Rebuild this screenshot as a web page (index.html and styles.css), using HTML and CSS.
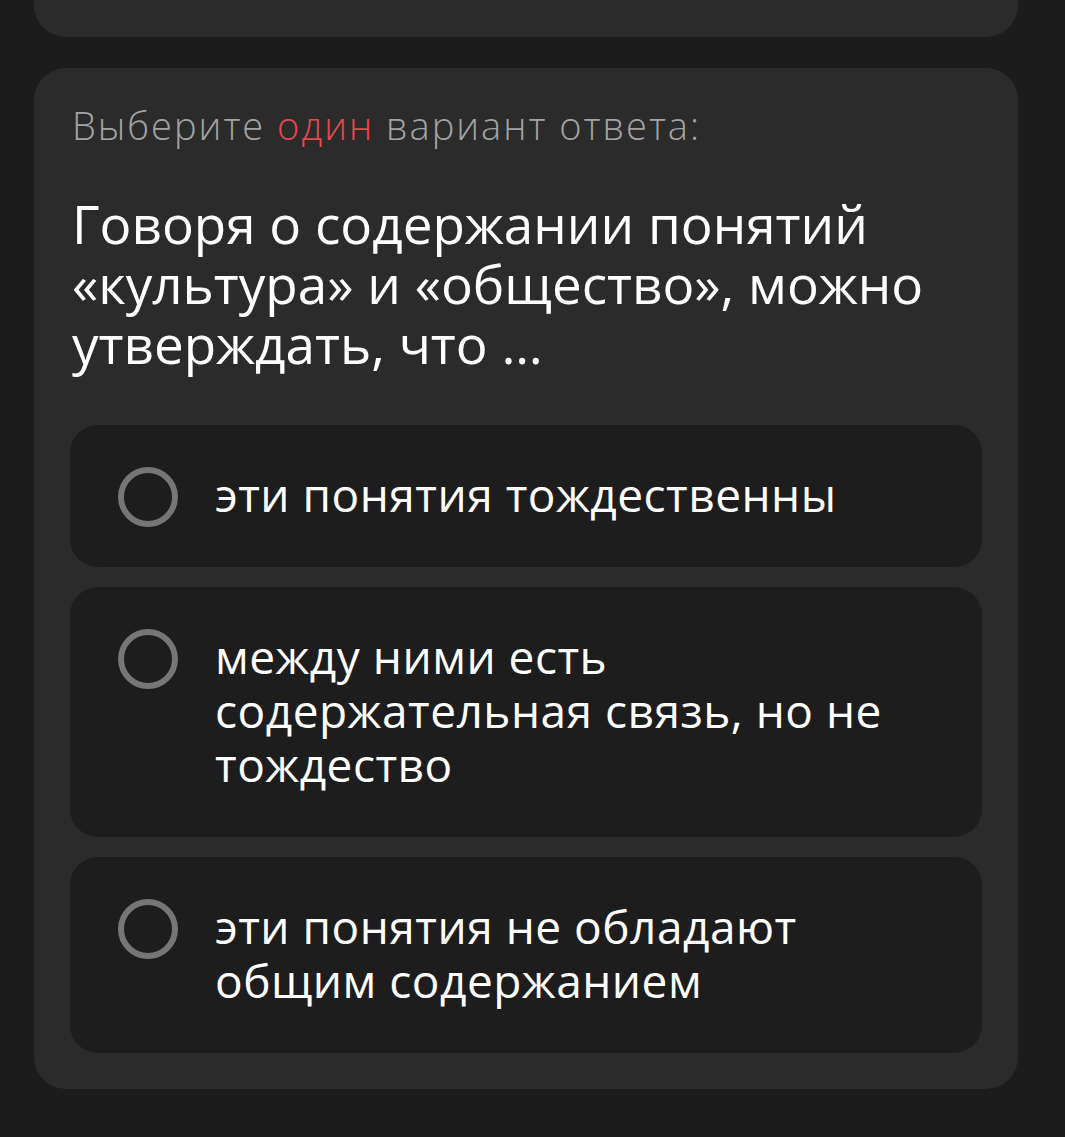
FILE: index.html
```html
<!DOCTYPE html>
<html lang="ru">
<head>
  <meta charset="UTF-8" />
  <title>Тест</title>
  <link rel="stylesheet" href="styles.css">
</head>
<body>

<div class="lenta">
  <div class="kartica kartica-prej"></div>

  <div class="kartica vprasanje">
    <p class="navodilo">Выберите <span class="rdece">один</span> вариант ответа:</p>
    <h2 class="besedilo">Говоря о содержании понятий «культура» и «общество», можно утверждать, что …</h2>

    <div class="odgovori">
      <label class="odgovor">
        <span class="krog"></span>
        <span class="tekst">эти понятия тождественны</span>
      </label>
      <label class="odgovor">
        <span class="krog"></span>
        <span class="tekst">между ними есть содержательная связь, но не тождество</span>
      </label>
      <label class="odgovor">
        <span class="krog"></span>
        <span class="tekst">эти понятия не обладают общим содержанием</span>
      </label>
    </div>
  </div>
</div>

</body>
</html>
```

FILE: styles.css
```css
body { margin: 0; background: #1c1c1c; font-family: "Open Sans", "Noto Sans", sans-serif; color: #fff; }
.lenta { width: 984px; margin-left: 34px; display: flex; flex-direction: column; gap: 31px; padding-bottom: 50px; }
.kartica { background: #2b2b2b; border-radius: 32px; }
.kartica-prej { height: 37px; border-radius: 0 0 32px 32px; }
.vprasanje { padding: 36px; }
.navodilo { margin: 0 0 0 2px; font-size: 38px; font-weight: 300; line-height: 42px; letter-spacing: 2px; color: #a3a3a3; }
.rdece { color: #e5484d; }
.besedilo { margin: 48px 0 0 2px; font-size: 53px; font-weight: 400; line-height: 60px; }
.odgovori { display: flex; flex-direction: column; gap: 20px; margin-top: 51px; }
.odgovor {
  display: flex; align-items: flex-start; gap: 37px;
  background: #1d1d1d; border-radius: 28px;
  padding: 42px 48px 46px; cursor: pointer;
}
.krog { flex: none; width: 48px; height: 48px; border: 6px solid #767676; border-radius: 50%; margin-bottom: -6px; }
.tekst { font-size: 46px; line-height: 54px; letter-spacing: 0.5px; }
```
